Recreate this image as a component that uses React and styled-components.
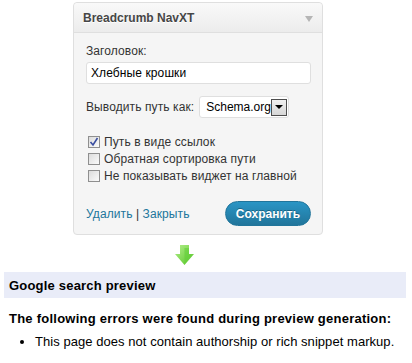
import React from "react";
import styled, { createGlobalStyle } from "styled-components";

const Global = createGlobalStyle`
  html, body { margin: 0; padding: 0; background: #fff; }
  body { font-family: "Liberation Sans", Arial, sans-serif; color: #333; }
`;

const Page = styled.div`
  padding-top: 2px;
  width: 412px;
`;

const Widget = styled.div`
  margin-left: 73px;
  width: 248px;
  border: 1px solid #dfdfdf;
  border-radius: 4px;
  background: #f5f5f5;
  box-shadow: 0 1px 0 #fff inset;
`;

const WidgetHead = styled.div`
  height: 29px;
  display: flex;
  align-items: center;
  justify-content: space-between;
  padding: 0 9px 0 9px;
  background: linear-gradient(#f9f9f9, #ececec);
  border-bottom: 1px solid #dfdfdf;
  border-radius: 4px 4px 0 0;
`;

const HeadTitle = styled.span`
  font-size: 12px;
  font-weight: bold;
  color: #464646;
  text-shadow: 0 1px 0 #fff;
`;

const Toggle = styled.span`
  width: 0;
  height: 0;
  border-left: 4px solid transparent;
  border-right: 4px solid transparent;
  border-top: 6px solid #b5b5b5;
  margin-top: 2px;
`;

const Body = styled.div`
  padding: 10px 11px 8px 12px;
  font-size: 12px;
  color: #333;
  letter-spacing: 0.1px;
`;

const Label = styled.div`
  line-height: 16px;
`;

const TextInput = styled.div`
  margin-top: 3px;
  height: 20px;
  border: 1px solid #dfdfdf;
  border-radius: 3px;
  background: #fff;
  display: flex;
  align-items: center;
  padding: 0 4px;
  font-size: 12px;
  color: #000;
`;

const SelectRow = styled.div`
  margin-top: 12px;
  display: flex;
  align-items: center;
  gap: 5px;
`;

const Select = styled.div`
  width: 90px;
  height: 22px;
  border: 1px solid #dfdfdf;
  border-radius: 3px;
  background: #fff;
  display: flex;
  align-items: center;
  justify-content: space-between;
  padding: 0 1px 0 6px;
  box-sizing: border-box;
  font-size: 12px;
  color: #000;
  letter-spacing: 0;
`;

const DropBtn = styled.span`
  width: 17px;
  height: 17px;
  box-sizing: border-box;
  border: 1px solid #4d4d4d;
  background: linear-gradient(#f0f0f0, #d6d6d6);
  display: flex;
  align-items: center;
  justify-content: center;
  &::after {
    content: "";
    border-left: 4px solid transparent;
    border-right: 4px solid transparent;
    border-top: 4px solid #000;
  }
`;

const Checks = styled.div`
  margin-top: 17px;
  display: flex;
  flex-direction: column;
  gap: 3px;
`;

const CheckRow = styled.label`
  display: flex;
  align-items: center;
  gap: 4px;
  line-height: 14px;
  height: 14px;
  padding-left: 2px;
`;

const Box = styled.span`
  width: 12px;
  height: 12px;
  box-sizing: border-box;
  border: 1px solid #8f8f8f;
  background: linear-gradient(135deg, #dcdcdc, #fbfbfb);
  display: flex;
  align-items: center;
  justify-content: center;
`;

const Footer = styled.div`
  margin-top: 18px;
  display: flex;
  align-items: center;
  justify-content: space-between;
`;

const Links = styled.div`
  font-size: 12px;
  color: #333;
`;

const Link = styled.a`
  color: #21759b;
  text-decoration: none;
`;

const SaveBtn = styled.button`
  height: 25px;
  width: 86px;
  border-radius: 13px;
  border: 1px solid #21759b;
  background: linear-gradient(#2a95c5, #21759b);
  color: #fff;
  font-family: "Liberation Sans", Arial, sans-serif;
  font-size: 12px;
  font-weight: bold;
  text-shadow: 0 -1px 0 rgba(0, 0, 0, 0.3);
  padding: 0;
`;

const ArrowWrap = styled.div`
  margin: 10px 0 0 175px;
  height: 20px;
`;

const PreviewBar = styled.div`
  margin: 7px 6px 0 4px;
  height: 26px;
  background: #e9ecf8;
  display: flex;
  align-items: center;
  padding-left: 5px;
  font-size: 13px;
  font-weight: bold;
  color: #000;
  letter-spacing: 0.2px;
`;

const ErrHead = styled.div`
  margin: 13px 0 0 9px;
  font-size: 13px;
  font-weight: bold;
  color: #000;
  line-height: 16px;
  letter-spacing: 0.24px;
`;

const ErrList = styled.ul`
  margin: 7px 0 0 0;
  padding-left: 35px;
  font-size: 13px;
  color: #000;
  line-height: 16px;
  letter-spacing: 0.05px;
`;

const Check = ({ checked, children }) => (
  <CheckRow>
    <Box>
      {checked && (
        <svg width="10" height="10" viewBox="0 0 10 10">
          <path d="M1.5 5 L4 8 L8.5 1" fill="none" stroke="#3a4ea0" strokeWidth="1.6" />
        </svg>
      )}
    </Box>
    {children}
  </CheckRow>
);

export default function App() {
  return (
    <Page>
      <Global />
      <Widget>
        <WidgetHead>
          <HeadTitle>Breadcrumb NavXT</HeadTitle>
          <Toggle />
        </WidgetHead>
        <Body>
          <Label>Заголовок:</Label>
          <TextInput>Хлебные крошки</TextInput>
          <SelectRow>
            <span>Выводить путь как:</span>
            <Select>
              Schema.org
              <DropBtn />
            </Select>
          </SelectRow>
          <Checks>
            <Check checked>Путь в виде ссылок</Check>
            <Check>Обратная сортировка пути</Check>
            <Check>Не показывать виджет на главной</Check>
          </Checks>
          <Footer>
            <Links>
              <Link href="#">Удалить</Link> | <Link href="#">Закрыть</Link>
            </Links>
            <SaveBtn>Сохранить</SaveBtn>
          </Footer>
        </Body>
      </Widget>
      <ArrowWrap>
        <svg width="19" height="20" viewBox="0 0 19 20">
          <defs>
            <linearGradient id="ag" x1="0" y1="0" x2="1" y2="1">
              <stop offset="0" stopColor="#b4ef8c" />
              <stop offset="1" stopColor="#54c424" />
            </linearGradient>
          </defs>
          <polygon points="5,0 14,0 14,9 19,9 9.5,20 0,9 5,9" fill="url(#ag)" />
          <polygon points="9.5,3 14,3 14,9 17,10 9.5,19" fill="#62cf38" opacity="0.6" />
        </svg>
      </ArrowWrap>
      <PreviewBar>Google search preview</PreviewBar>
      <ErrHead>The following errors were found during preview generation:</ErrHead>
      <ErrList>
        <li>This page does not contain authorship or rich snippet markup.</li>
      </ErrList>
    </Page>
  );
}
